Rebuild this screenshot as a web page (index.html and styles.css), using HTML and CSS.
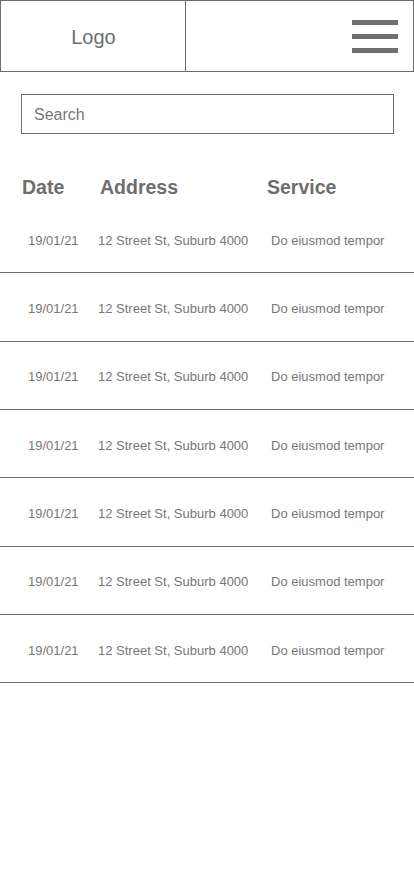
FILE: index.html
```html
<!DOCTYPE html>
<html lang="en">
<head>
<meta charset="utf-8">
<title>Jobs</title>
<link rel="stylesheet" href="styles.css">
</head>
<body>
<header class="topbar">
  <div class="logo-cell">Logo</div>
  <div class="menu-cell">
    <div class="hamburger" aria-label="Menu">
      <span class="bar"></span>
      <span class="bar"></span>
      <span class="bar"></span>
    </div>
  </div>
</header>

<div class="search-wrap">
  <div class="search">Search</div>
</div>

<div class="table">
  <div class="thead">
    <div>Date</div>
    <div>Address</div>
    <div>Service</div>
  </div>
  <div class="row"><div>19/01/21</div><div>12 Street St, Suburb 4000</div><div>Do eiusmod tempor</div></div>
  <div class="row"><div>19/01/21</div><div>12 Street St, Suburb 4000</div><div>Do eiusmod tempor</div></div>
  <div class="row"><div>19/01/21</div><div>12 Street St, Suburb 4000</div><div>Do eiusmod tempor</div></div>
  <div class="row"><div>19/01/21</div><div>12 Street St, Suburb 4000</div><div>Do eiusmod tempor</div></div>
  <div class="row"><div>19/01/21</div><div>12 Street St, Suburb 4000</div><div>Do eiusmod tempor</div></div>
  <div class="row"><div>19/01/21</div><div>12 Street St, Suburb 4000</div><div>Do eiusmod tempor</div></div>
  <div class="row"><div>19/01/21</div><div>12 Street St, Suburb 4000</div><div>Do eiusmod tempor</div></div>
</div>
</body>
</html>
```

FILE: styles.css
```css
* { box-sizing: border-box; }

html, body {
  margin: 0;
  padding: 0;
  background: #ffffff;
}

body {
  width: 414px;
  font-family: "Liberation Sans", Arial, sans-serif;
  color: #777777;
}

.topbar {
  display: flex;
  height: 72px;
  border: 1px solid #6e6e6e;
}

.logo-cell {
  width: 185px;
  display: flex;
  align-items: center;
  justify-content: center;
  font-size: 20px;
  color: #6e6e6e;
  border-right: 1px solid #6e6e6e;
  padding-left: 1px;
  padding-top: 2px;
}

.menu-cell {
  flex: 1;
  display: flex;
  justify-content: flex-end;
  align-items: flex-start;
  padding-top: 19px;
  padding-right: 15px;
}

.hamburger {
  display: flex;
  flex-direction: column;
  gap: 9px;
  width: 46px;
}

.bar {
  display: block;
  height: 5px;
  background: #707070;
}

.search-wrap {
  padding: 22px 20px 0 21px;
}

.search {
  height: 40px;
  border: 1px solid #6e6e6e;
  padding-left: 12px;
  padding-top: 1px;
  display: flex;
  align-items: center;
  font-size: 16px;
  color: #777777;
}

.table {
  margin-top: 37px;
}

.thead {
  display: grid;
  grid-template-columns: 78px 167px 1fr;
  padding-left: 22px;
  padding-bottom: 2px;
  height: 34px;
  align-items: center;
  font-size: 19.5px;
  font-weight: bold;
  color: #6e6e6e;
}

.row {
  display: grid;
  grid-template-columns: 70px 173px 1fr;
  padding-left: 28px;
  padding-top: 3px;
  height: 68.33px;
  align-items: center;
  font-size: 13px;
  color: #777777;
  border-bottom: 1px solid #6e6e6e;
}
```
